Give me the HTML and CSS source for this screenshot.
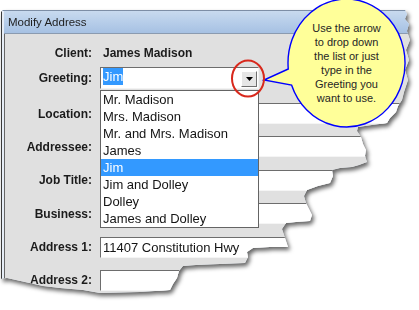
FILE: index.html
```html
<!DOCTYPE html>
<html>
<head>
<meta charset="utf-8">
<link rel="stylesheet" href="styles.css">
</head>
<body>
<div class="shadow">
  <div class="sheet">
    <div class="window">
      <div class="titlebar">Modify Address</div>
      <div class="client">
        <div class="row row-client"><span class="label">Client:</span><span class="value">James Madison</span></div>
        <div class="row row-greeting"><span class="label">Greeting:</span>
          <div class="combo">
            <span class="sel">Jim</span>
            <span class="btn"><svg width="7" height="4" viewBox="0 0 7 4"><polygon points="0,0 7,0 3.5,4" fill="#000"/></svg></span>
            <ul class="list">
              <li>Mr. Madison</li>
              <li>Mrs. Madison</li>
              <li>Mr. and Mrs. Madison</li>
              <li>James</li>
              <li class="active">Jim</li>
              <li>Jim and Dolley</li>
              <li>Dolley</li>
              <li>James and Dolley</li>
            </ul>
          </div>
        </div>
        <div class="row row-field first"><span class="label">Location:</span><div class="field"></div></div>
        <div class="row row-field"><span class="label">Addressee:</span><div class="field"></div></div>
        <div class="row row-field"><span class="label">Job Title:</span><div class="field"></div></div>
        <div class="row row-field"><span class="label">Business:</span><div class="field"></div></div>
        <div class="row row-field"><span class="label">Address 1:</span><div class="field">11407 Constitution Hwy</div></div>
        <div class="row row-field"><span class="label">Address 2:</span><div class="field"></div></div>
      </div>
    </div>
  </div>
</div>
<svg class="overlay" width="419" height="310" viewBox="0 0 419 310">
  <path d="M 288.26 69 L 264 80 L 291.56 85 A 58.5 64 0 1 0 288.26 69 Z" fill="#ffff99" stroke="#0000ff" stroke-width="1.4"/>
  <ellipse cx="248" cy="78.5" rx="16" ry="18" fill="none" stroke="#d8281c" stroke-width="2"/>
</svg>
<div class="callout-text">Use the arrow<br>to drop down<br>the list or just<br>type in the<br>Greeting you<br>want to use.</div>
</body>
</html>
```
FILE: styles.css
```css
html, body {
  margin: 0;
  padding: 0;
}
body {
  width: 419px;
  height: 310px;
  background: #ffffff;
  overflow: hidden;
  position: relative;
  font-family: "Liberation Sans", Arial, sans-serif;
}
.shadow {
  filter: drop-shadow(2px 3px 2px rgba(0, 0, 0, 0.6));
}
.sheet {
  height: 310px;
  box-sizing: border-box;
  padding: 10px 0 0 1px;
  clip-path: polygon(1px 12px, 3px 10px, 405px 10px, 407px 14px, 405px 19px, 409px 24px, 407px 31px, 410px 40px, 406px 50px, 409px 60px, 405px 70px, 408px 80px, 404px 92px, 402px 100px, 398px 106px, 396px 112px, 390px 118px, 387px 123px, 372px 125px, 358px 127px, 357px 131px, 361px 137px, 363px 144px, 366px 150px, 365px 156px, 367px 162px, 359px 165px, 352px 167px, 340px 168px, 332px 170px, 333px 176px, 330px 183px, 318px 186px, 307px 190px, 304px 196px, 306px 203px, 309px 209px, 312px 215px, 310px 221px, 296px 222px, 286px 223px, 282px 229px, 285px 238px, 288px 247px, 270px 247px, 253px 248px, 247px 252px, 248px 257px, 245px 263px, 220px 264px, 196px 265px, 183px 266px, 179px 271px, 177px 278px, 173px 284px, 170px 290px, 140px 292px, 100px 293px, 83px 290px, 60px 288px, 43px 286px, 25px 282px, 7px 278px, 0px 279px);
}
.window {
  height: 300px;
  box-sizing: border-box;
  border-left: 1px solid #3a3a3a;
  border-top: 1px solid #7d8ea6;
  padding-left: 2px;
  background: #e6edf6;
  display: flex;
  flex-direction: column;
}
.titlebar {
  height: 22px;
  flex: none;
  background: linear-gradient(#c8daef, #a6c1e3);
  border-bottom: 1px solid #8b9bb0;
  padding-left: 4px;
  font-size: 11.5px;
  line-height: 22px;
  color: #1e1e1e;
}
.client {
  flex: 1;
  background: #e0e0e0;
  border-left: 1px solid #666666;
  padding-top: 8px;
  display: flex;
  flex-direction: column;
}
.row {
  display: flex;
  align-items: center;
  flex: none;
}
.label {
  width: 87px;
  flex: none;
  margin-right: 8px;
  text-align: right;
  font-weight: bold;
  font-size: 12px;
  color: #1b1b1b;
}
.row-client {
  height: 22px;
}
.value {
  font-weight: bold;
  font-size: 12px;
  color: #1b1b1b;
  padding-left: 3px;
}
.row-greeting {
  height: 22px;
  margin-top: 3px;
}
.combo {
  position: relative;
  width: 159px;
  height: 22px;
  box-sizing: border-box;
  border: 1px solid;
  border-color: #6d6d6d #f2f2f2 #f2f2f2 #6d6d6d;
  background: #ffffff;
  padding-left: 2px;
  display: flex;
}
.sel {
  align-self: flex-start;
  background: #3399ff;
  color: #ffffff;
  font-size: 13px;
  line-height: 17px;
  height: 17px;
}
.btn {
  margin-left: auto;
  margin-right: 1px;
  margin-bottom: 1px;
  align-self: flex-end;
  width: 16px;
  height: 16px;
  box-sizing: border-box;
  border: 1px solid;
  border-color: #ffffff #6f6f6f #6f6f6f #ffffff;
  background: #e6e6e6;
  display: flex;
  align-items: center;
  justify-content: center;
}
.btn svg {
  display: block;
}
.list {
  position: absolute;
  left: -1px;
  top: 22px;
  width: 159px;
  box-sizing: border-box;
  margin: 0;
  padding: 0;
  list-style: none;
  background: #ffffff;
  border: 1px solid #646464;
  z-index: 2;
}
.list li {
  height: 17px;
  line-height: 17px;
  padding-left: 2px;
  font-size: 13px;
  color: #141414;
  white-space: nowrap;
}
.list li.active {
  background: #3399ff;
  color: #ffffff;
}
.row-field {
  height: 21px;
  margin-top: 12.4px;
}
.row-field.first {
  margin-top: 14px;
}
.field {
  flex: 1;
  height: 21px;
  box-sizing: border-box;
  background: #ffffff;
  border-top: 1px solid #6d6d6d;
  border-left: 1px solid #6d6d6d;
  border-bottom: 1px solid #f5f5f5;
  padding-left: 2px;
  font-size: 13px;
  line-height: 19px;
  color: #141414;
}
.overlay {
  position: absolute;
  left: 0;
  top: 0;
}
.callout-text {
  position: absolute;
  left: 288px;
  top: 21px;
  width: 117px;
  text-align: center;
  font-size: 11px;
  line-height: 14px;
  color: #262626;
}
```
